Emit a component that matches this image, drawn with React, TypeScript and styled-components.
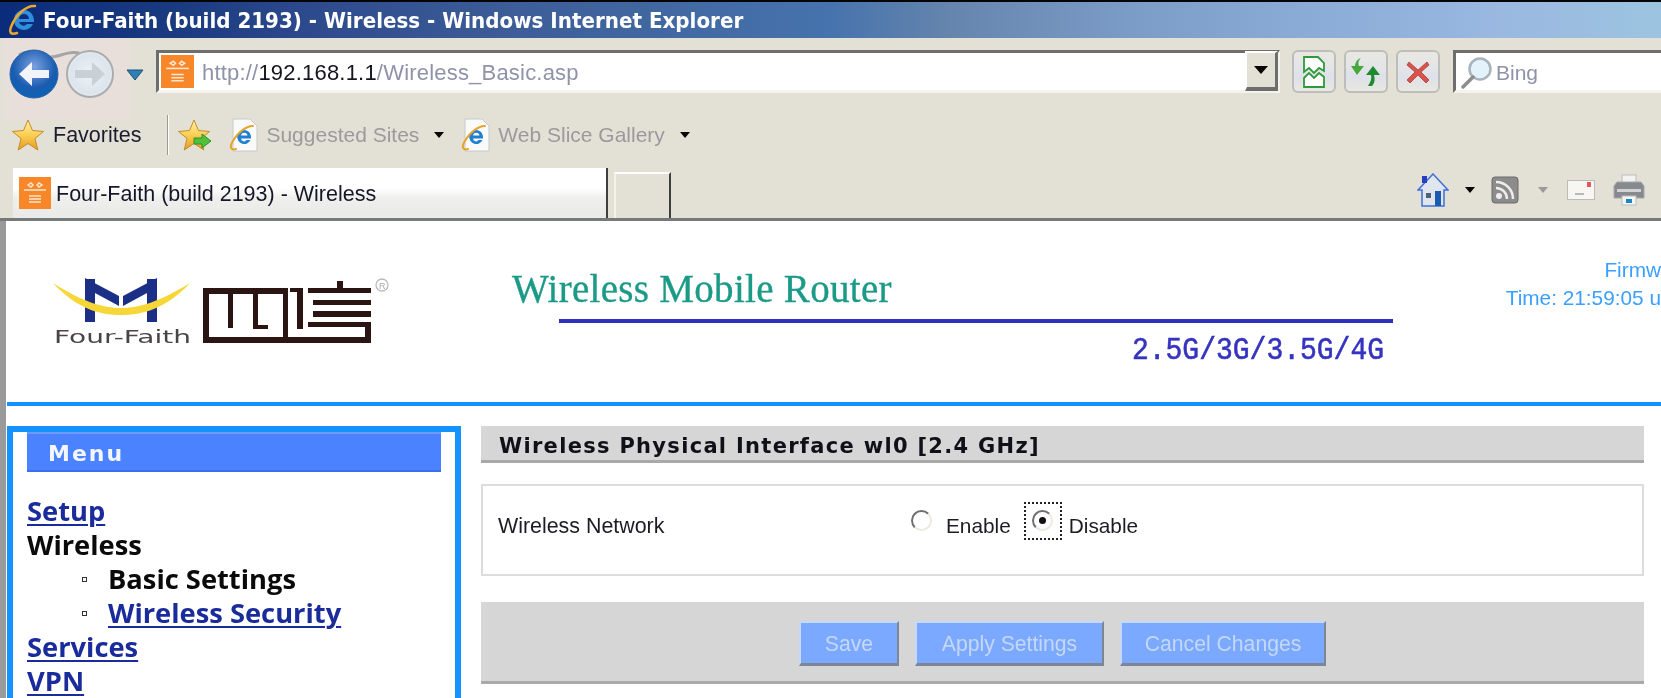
import React from 'react';
import styled, { createGlobalStyle } from 'styled-components';

const GlobalStyle = createGlobalStyle`
    html, body {
        margin: 0;
        height: 698px;
        overflow: hidden;
        background: #fff;
    }
    * {
        box-sizing: border-box;
    }
`;

const uiFont = `"Liberation Sans", Arial, sans-serif`;

const Window = styled.div`
    width: 1661px;
    height: 698px;
    overflow: hidden;
    display: flex;
    flex-direction: column;
    font-family: ${uiFont};
    filter: blur(0.45px);
`;

const TitleBar = styled.div`
    flex: none;
    height: 38px;
    border-top: 2px solid #050505;
    display: flex;
    align-items: center;
    gap: 3px;
    padding-left: 8px;
    background: linear-gradient(90deg, #0a2c7a 0, #1a3a80 170px, #2f4c8e 330px, #3d5e98 520px, #4673ad 830px, #6585ad 950px, #7b9cc7 1130px, #89abd6 1300px, #9ab8e0 1500px, #9cc4e0 1661px);
`;

const TitleText = styled.span`
    color: #fff;
    font-family: "DejaVu Sans", sans-serif;
    font-weight: bold;
    font-size: 22px;
    transform: scaleX(0.905);
    transform-origin: left center;
    white-space: nowrap;
`;

const Chrome = styled.div`
    flex: none;
    height: 183px;
    background: #e3e1d5;
    display: flex;
    flex-direction: column;
    border-bottom: 3px solid #77787a;
`;

const NavRow = styled.div`
    position: relative;
    flex: none;
    height: 65px;
    display: flex;
    align-items: flex-start;
    padding-top: 12px;
    padding-left: 156px;
`;

const NavPatch = styled.div`
    position: absolute;
    left: 5px;
    top: 0;
    width: 125px;
    height: 82px;
    background: #e8dfdb;
`;

const NavCluster = styled.svg`
    position: absolute;
    left: 5px;
    top: 5px;
`;

const InsetBox = styled.div<{ $grow?: boolean }>`
    height: 43px;
    background: #fff;
    border-top: 3px solid #6e6e6e;
    border-left: 3px solid #6e6e6e;
    border-bottom: 3px solid #f4f3ec;
    display: flex;
    align-items: center;
    ${p => p.$grow ? 'flex: 1;' : ''}
`;

const AddressBox = styled(InsetBox)`
    width: 1124px;
    flex: none;
    padding-left: 2px;
    border-right: 2px solid #f4f3ec;
`;

const SearchBox = styled(InsetBox)`
    margin-left: 13px;
    padding-left: 4px;
`;

const Favicon = styled.svg`
    flex: none;
    display: block;
`;

const UrlText = styled.span`
    margin-left: 8px;
    padding-top: 3px;
    flex: 1;
    font-size: 22px;
    color: #8f93a8;
    white-space: nowrap;
    letter-spacing: 0.2px;
`;

const UrlHost = styled.span`
    color: #15151f;
`;

const DropButton = styled.div`
    width: 33px;
    height: 40px;
    margin-top: -1px;
    background: #e3e1d5;
    border-top: 2px solid #fff;
    border-left: 2px solid #fff;
    border-right: 3px solid #6e6e6e;
    border-bottom: 4px solid #6e6e6e;
    display: flex;
    align-items: center;
    justify-content: center;
`;

const Caret = styled.span<{ $muted?: boolean }>`
    display: inline-block;
    flex: none;
    width: 0;
    height: 0;
    border-left: 5px solid transparent;
    border-right: 5px solid transparent;
    border-top: 6px solid ${p => p.$muted ? '#9a9a9a' : '#050505'};
`;

const WideCaret = styled(Caret)`
    border-left-width: 7px;
    border-right-width: 7px;
    border-top-width: 8px;
`;

const ToolButtons = styled.div`
    display: flex;
    gap: 8px;
    margin-left: 12px;
`;

const ToolButton = styled.div`
    width: 44px;
    height: 43px;
    border: 2px solid #bdbdbb;
    border-radius: 6px;
    background: linear-gradient(#e9e8e2 0, #e4e5e8 35%, #dfe1ea 65%, #e8e7e0 100%);
    display: flex;
    align-items: center;
    justify-content: center;
`;

const BingText = styled.span`
    margin-left: 2px;
    padding-top: 3px;
    font-size: 21px;
    color: #8f93a8;
`;

const FavRow = styled.div`
    flex: none;
    height: 58px;
    display: flex;
    align-items: center;
    padding-left: 12px;
    padding-top: 6px;
`;

const FavLabel = styled.span`
    margin-left: 7px;
    margin-right: 26px;
    font-size: 21.5px;
    color: #1c1c30;
    white-space: nowrap;
`;

const FavSeparator = styled.div`
    width: 2px;
    height: 40px;
    background: #9b9b96;
    border-right: 1px solid #fff;
    margin-right: 9px;
`;

const LinkItem = styled.div`
    display: flex;
    align-items: center;
    margin-left: 17px;
`;

const LinkLabel = styled.span`
    margin-left: 7px;
    margin-right: 15px;
    font-size: 21px;
    color: #9a9a9e;
    white-space: nowrap;
`;

const TabRow = styled.div`
    flex: 1;
    display: flex;
    align-items: flex-end;
    padding-left: 13px;
`;

const ActiveTab = styled.div`
    width: 595px;
    height: 50px;
    background: linear-gradient(#fff 0, #fff 40%, #efefec 60%, #e9e9e9 100%);
    border-right: 2px solid #3f3f3f;
    display: flex;
    align-items: center;
    padding-left: 6px;
    gap: 5px;
`;

const TabLabel = styled.span`
    font-size: 21.5px;
    padding-top: 2px;
    color: #16162a;
    white-space: nowrap;
`;

const NewTab = styled.div`
    width: 57px;
    height: 46px;
    margin-left: 6px;
    border-top: 2px solid #fff;
    border-left: 2px solid #f2f1ea;
    border-right: 2px solid #3f3f3f;
`;

const CommandBar = styled.div`
    margin-left: auto;
    height: 50px;
    display: flex;
    align-items: center;
    width: 244px;
    padding-bottom: 6px;
`;

const CommandIcon = styled.svg<{ $gap?: number }>`
    flex: none;
    margin-left: ${p => p.$gap ?? 0}px;
`;

const CaretSlot = styled.div<{ $width: number }>`
    flex: none;
    width: ${p => p.$width}px;
    display: flex;
    justify-content: center;
`;

const Page = styled.div`
    flex: 1;
    min-height: 0;
    display: flex;
    flex-direction: column;
    background: #fff;
    border-left: 6px solid #9a9a9a;
    padding-left: 1px;
`;

const Header = styled.div`
    flex: none;
    height: 185px;
    display: flex;
    border-bottom: 4px solid #1493ff;
`;

const LogoMark = styled.svg`
    flex: none;
    margin: 53px 0 0 43px;
`;

const HeaderTitle = styled.div`
    flex: none;
    width: 881px;
    margin-left: 122px;
    padding-top: 47px;
    display: flex;
    flex-direction: column;
`;

const ProductName = styled.div`
    font-family: "Liberation Serif", "Times New Roman", serif;
    font-size: 39px;
    line-height: 42px;
    letter-spacing: 0.3px;
    -webkit-text-stroke: 0.35px #1b9a88;
    color: #1b9a88;
    white-space: nowrap;
`;

const TitleRule = styled.div`
    height: 4px;
    margin: 9px 0 0 47px;
    background: #3030c0;
`;

const Bands = styled.div`
    margin-top: 12px;
    padding-right: 9px;
    text-align: right;
    font-family: "Liberation Mono", monospace;
    font-size: 28px;
    line-height: 32px;
    color: #3434c0;
    -webkit-text-stroke: 0.5px #3434c0;
    white-space: nowrap;
    transform: scaleY(1.15);
`;

const StatusBlock = styled.div`
    flex: 1;
    padding-top: 35px;
    text-align: right;
    font-size: 20.8px;
    line-height: 28px;
    color: #3aa0ff;
    white-space: nowrap;
`;

const Main = styled.div`
    flex: 1;
    min-height: 0;
    display: flex;
    padding-top: 20px;
`;

const Sidebar = styled.div`
    flex: none;
    width: 454px;
    border: 6px solid #1493ff;
    border-bottom: none;
    padding: 0 14px;
`;

const MenuTitle = styled.div`
    height: 40px;
    padding-left: 21px;
    background: #4a82ff;
    border-top: 2px solid #6d9bff;
    border-bottom: 2px solid #3a70e8;
    color: #f4f6ff;
    font-family: "DejaVu Sans", sans-serif;
    font-weight: bold;
    font-size: 22px;
    line-height: 39px;
    letter-spacing: 2px;
`;

const MenuList = styled.div`
    margin-top: 22px;
    font-family: "Open Sans", sans-serif;
    font-weight: 700;
    font-size: 27.3px;
    line-height: 34px;
    color: #0a0a0a;
`;

const MenuLine = styled.div<{ $sub?: boolean }>`
    display: flex;
    align-items: center;
    height: 34px;
    white-space: nowrap;
    padding-left: ${p => p.$sub ? '55px' : '0'};
`;

const Bullet = styled.span`
    flex: none;
    width: 5px;
    height: 5px;
    margin-right: 21px;
    border: 1.5px solid #333;
    background: #fff;
`;

const MenuLink = styled.a`
    color: #1a2b9c;
    text-decoration: underline;
    text-decoration-thickness: 2px;
    text-underline-offset: 3px;
`;

const Content = styled.div`
    flex: none;
    width: 1163px;
    margin-left: 20px;
    display: flex;
    flex-direction: column;
`;

const SectionTitle = styled.div`
    height: 37px;
    padding-left: 18px;
    background: #d6d6d6;
    border-bottom: 3px solid #a9a9a9;
    font-family: "DejaVu Sans", sans-serif;
    font-weight: bold;
    font-size: 21px;
    line-height: 40px;
    letter-spacing: 1.3px;
    color: #101018;
    white-space: nowrap;
`;

const FieldBox = styled.div`
    height: 92px;
    margin-top: 21px;
    padding: 16px 15px 0;
    border: 2px solid #dcdcdc;
    display: grid;
    grid-template-columns: 412px 1fr;
    align-items: start;
`;

const FieldLabel = styled.div`
    height: 38px;
    padding-top: 12px;
    font-size: 21.4px;
    line-height: 24px;
    color: #1c1c24;
`;

const RadioGroup = styled.div`
    display: flex;
    align-items: flex-start;
`;

const RadioFocus = styled.span<{ $focused?: boolean }>`
    flex: none;
    width: 38px;
    height: 38px;
    padding-bottom: 1px;
    display: flex;
    align-items: center;
    justify-content: center;
    border: 2px dotted ${p => p.$focused ? '#222' : 'transparent'};
`;

const Radio = styled.span<{ $checked?: boolean }>`
    width: 21px;
    height: 21px;
    border-radius: 50%;
    background: #fff;
    border: 2px solid #eceadf;
    border-top-color: #6f6f6f;
    border-left-color: #6f6f6f;
    display: flex;
    align-items: center;
    justify-content: center;
    &::after {
        content: '';
        width: 7px;
        height: 7px;
        border-radius: 50%;
        background: ${p => p.$checked ? '#111' : 'transparent'};
    }
`;

const RadioText = styled.span`
    height: 38px;
    padding-top: 12px;
    font-size: 20.8px;
    line-height: 24px;
    color: #1c1c24;
`;

const EnableRadio = styled(RadioFocus)`
    margin-left: -8px;
`;

const DisableText = styled(RadioText)`
    margin-left: 7px;
`;

const EnableText = styled(RadioText)`
    margin-left: 6px;
    margin-right: 13px;
`;

const ButtonBar = styled.div`
    height: 82px;
    margin-top: 26px;
    background: #d6d6d6;
    border-bottom: 3px solid #a9a9a9;
    padding-top: 19px;
    display: flex;
    justify-content: center;
    align-items: flex-start;
    gap: 16px;
`;

const FormButton = styled.button<{ $width: number }>`
    width: ${p => p.$width}px;
    height: 45px;
    padding: 2px 0 0;
    background: #7aa9ff;
    border: none;
    border-top: 2px solid #c6d8f5;
    border-left: 2px solid #c6d8f5;
    border-right: 2px solid #7c8694;
    border-bottom: 3px solid #7c8694;
    color: #c4d8f6;
    font-family: ${uiFont};
    font-size: 21.2px;
`;

const IeLogo = ({ size }: { size: number }) => (
    <svg width={size} height={size} viewBox="0 0 32 32" style={{ flex: 'none', display: 'block' }}>
        <path d="M16 6a10 10 0 1 0 9 14h-6a4.6 4.6 0 0 1-8-2h15c.5-6.500-4-12-10-12zm-5 9a5 5 0 0 1 10 0z" fill="#2f8fdc" />
        <path d="M27 2C19 1 8 10 3 23c-2 6 0 8 6 6" fill="none" stroke="#e8a92c" strokeWidth="2.500" strokeLinecap="round" />
    </svg>
);

const PageIe = () => (
    <svg width={30} height={34} viewBox="0 0 30 34" style={{ flex: 'none', display: 'block' }}>
        <path d="M4 1h17l7 7v25H4z" fill="#fafafa" stroke="#c8c8c8" />
        <path d="M15 12a7 7 0 1 0 6.500 10h-4a3 3 0 0 1-5.500-1.500h10c.5-4.500-2.500-8.500-7-8.500zm-3 5.500a3.300 3.300 0 0 1 6.500 0z" fill="#1f7fd0" />
        <path d="M24 8C16 8 6 17 2 27c-1 4 2 5 5 4" fill="none" stroke="#e3a52a" strokeWidth="2" strokeLinecap="round" />
    </svg>
);

const SiteIcon = ({ size }: { size: number }) => (
    <Favicon width={size} height={size} viewBox="0 0 32 32">
        <rect width="32" height="32" fill="#f8872a" />
        <g stroke="#fde6cf" strokeWidth="1.500" fill="none">
            <path d="M9 8l3-2 2 2-2 2zM18 8l2-2 3 2-3 2z" />
            <path d="M5 13h22" />
            <path d="M10 19h12M10 22h12M10 25h12" />
        </g>
    </Favicon>
);

const Star = ({ arrow }: { arrow?: boolean }) => (
    <svg width={34} height={32} viewBox="0 0 34 32" style={{ flex: 'none', display: 'block' }}>
        <defs>
            <linearGradient id={arrow ? 'starB' : 'starA'} x1="0" y1="0" x2="0" y2="1">
                <stop offset="0" stopColor="#fff3b0" />
                <stop offset="0.5" stopColor="#f9cf52" />
                <stop offset="1" stopColor="#e79b26" />
            </linearGradient>
        </defs>
        <path d="M16 1l4.500 10.500 11 1-8.500 7 2.800 11.500L16 24.500 6.200 31 9 19.500l-8.500-7 11-1z" fill={`url(#${arrow ? 'starB' : 'starA'})`} stroke="#c98a28" strokeWidth="1" />
        {arrow && <path d="M16 19h8v-4l9 7-9 7v-4h-8z" fill="#4fc13a" stroke="#2f8f26" strokeWidth="1" />}
    </svg>
);

const App = () => (
    <Window>
        <GlobalStyle />
        <TitleBar>
            <IeLogo size={32} />
            <TitleText>Four-Faith (build 2193) - Wireless - Windows Internet Explorer</TitleText>
        </TitleBar>
        <Chrome>
            <NavRow>
                <NavPatch />
                <NavCluster width={140} height={64} viewBox="0 0 140 64">
                    <defs>
                        <radialGradient id="backFill" cx="0.5" cy="0.35" r="0.8">
                            <stop offset="0" stopColor="#7da2e0" />
                            <stop offset="0.55" stopColor="#1a5cb0" />
                            <stop offset="0.85" stopColor="#0a63b5" />
                            <stop offset="1" stopColor="#39b3e6" />
                        </radialGradient>
                        <radialGradient id="fwdFill" cx="0.5" cy="0.5" r="0.6">
                            <stop offset="0" stopColor="#eef2f6" />
                            <stop offset="0.7" stopColor="#dce5ec" />
                            <stop offset="1" stopColor="#f4f8fa" />
                        </radialGradient>
                    </defs>
                    <path d="M14 12c12-8 22 2 32 2s22-10 36 0" fill="none" stroke="#a5a5a5" strokeWidth="3" />
                    <circle cx="29" cy="31" r="24" fill="url(#backFill)" stroke="#2a5fa8" />
                    <path d="M14 31l13-12v8h17v8H27v8z" fill="#f1f4fb" />
                    <circle cx="85" cy="31" r="23" fill="url(#fwdFill)" stroke="#a9adb0" strokeWidth="2" />
                    <path d="M100 31L87 19v8H70v8h17v8z" fill="#c9d0d6" />
                    <path d="M122 27h16l-8 10z" fill="#2f7fb8" stroke="#204f74" />
                </NavCluster>
                <AddressBox>
                    <SiteIcon size={33} />
                    <UrlText>http://<UrlHost>192.168.1.1</UrlHost>/Wireless_Basic.asp</UrlText>
                    <DropButton><WideCaret /></DropButton>
                </AddressBox>
                <ToolButtons>
                    <ToolButton>
                        <svg width={24} height={32} viewBox="0 0 24 32">
                            <path d="M2 1h14l6 6v8l-5-3-5 5-5-5-5 4zM2 22l5-5 5 5 5-5 5 4v10H2z" fill="#fff" stroke="#2f9a3a" strokeWidth="1.800" />
                        </svg>
                    </ToolButton>
                    <ToolButton>
                        <svg width={30} height={30} viewBox="0 0 30 30">
                            <path d="M10 1c-3 3-3 6-2 8h5l-7 9-6-9h4c0-3 2-7 6-8z" fill="#47a83c" />
                            <path d="M21 29c3-3 3-7 2-11h6l-7-9-7 9h5c1 4-1 8-3 11z" fill="#1f8a2c" />
                        </svg>
                    </ToolButton>
                    <ToolButton>
                        <svg width={24} height={24} viewBox="0 0 24 24">
                            <path d="M3 2l9 8 9-8 2 3-8 7 8 8-3 3-8-8-8 8-3-3 8-8-8-7z" fill="#d9534c" stroke="#a9403a" strokeWidth="0.800" />
                        </svg>
                    </ToolButton>
                </ToolButtons>
                <SearchBox $grow>
                    <svg width={34} height={34} viewBox="0 0 34 34" style={{ flex: 'none' }}>
                        <circle cx="20" cy="14" r="10.500" fill="#e4f3fb" stroke="#a8b4bc" strokeWidth="2.500" />
                        <path d="M13 22L3 32" stroke="#8d8d8d" strokeWidth="3.500" strokeLinecap="round" />
                    </svg>
                    <BingText>Bing</BingText>
                </SearchBox>
            </NavRow>
            <FavRow>
                <Star />
                <FavLabel>Favorites</FavLabel>
                <FavSeparator />
                <Star arrow />
                <LinkItem>
                    <PageIe />
                    <LinkLabel>Suggested Sites</LinkLabel>
                    <Caret />
                </LinkItem>
                <LinkItem>
                    <PageIe />
                    <LinkLabel>Web Slice Gallery</LinkLabel>
                    <Caret />
                </LinkItem>
            </FavRow>
            <TabRow>
                <ActiveTab>
                    <SiteIcon size={32} />
                    <TabLabel>Four-Faith (build 2193) - Wireless</TabLabel>
                </ActiveTab>
                <NewTab />
                <CommandBar>
                    <CommandIcon width={32} height={34} viewBox="0 0 32 34">
                        <path d="M16 1L1 17h4v16h22V17h4z" fill="#dfe6ee" stroke="#3f6fd8" strokeWidth="1.500" />
                        <rect x="5" y="3" width="5" height="7" fill="#2a3fc0" />
                        <rect x="9" y="20" width="5" height="5" fill="#50627a" />
                        <rect x="18" y="18" width="6" height="15" fill="#1a5cb0" />
                    </CommandIcon>
                    <CaretSlot $width={42}><Caret /></CaretSlot>
                    <CommandIcon width={28} height={28} viewBox="0 0 28 28">
                        <rect x="1" y="1" width="26" height="26" rx="3" fill="#8c8c8c" stroke="#6a6a6a" />
                        <circle cx="8" cy="20" r="3" fill="#eee" />
                        <path d="M5 12a11 11 0 0 1 11 11M5 6a17 17 0 0 1 17 17" fill="none" stroke="#eee" strokeWidth="2.500" />
                    </CommandIcon>
                    <CaretSlot $width={48}><Caret $muted /></CaretSlot>
                    <CommandIcon width={28} height={20} viewBox="0 0 28 20">
                        <rect x="0.500" y="0.500" width="27" height="19" fill="#f7f6f2" stroke="#bcbcbc" />
                        <rect x="20" y="2" width="4" height="5" fill="#e5565a" />
                        <path d="M8 14h9" stroke="#a5a5a5" strokeWidth="1.500" />
                    </CommandIcon>
                    <CommandIcon width={32} height={32} viewBox="0 0 32 32" $gap={18}>
                        <rect x="9" y="1" width="14" height="10" fill="#f2f2f0" stroke="#bcbcbc" />
                        <path d="M1 12l3-4h24l3 4v12H1z" fill="#868a8e" stroke="#a5a5a5" />
                        <rect x="4" y="15" width="24" height="3" fill="#d2d2d2" />
                        <rect x="9" y="22" width="14" height="9" fill="#f5f5f5" stroke="#bcbcbc" />
                        <rect x="13" y="25" width="6" height="4" fill="#1a86c8" />
                    </CommandIcon>
                </CommandBar>
            </TabRow>
        </Chrome>
        <Page>
            <Header>
                <LogoMark width={340} height={72} viewBox="0 0 340 72">
                    <path d="M35 5h10v43H35zM97 5h10v43H97z" fill="#1c2f86" />
                    <path d="M35 4l34 18v10L45 19H35zM107 4L73 22v10l24-13h10z" fill="#1c2f86" />
                    <path d="M3 9c30 19 50 25 68 25s38-6 69-25c-24 26-48 32-69 32S27 35 3 9z" fill="#f7d737" />
                    <text x="4" y="69" fontFamily="DejaVu Sans, sans-serif" fontSize="18" textLength="137" lengthAdjust="spacingAndGlyphs" fill="#4a4445">Four-Faith</text>
                    <g fill="#2a1512">
                        <path d="M153 14h6v55h-6zM153 63h168v6H153zM153 14h85v6h-85zM315 48h6v21h-6z" />
                        <path d="M178 18h5v36h-5zM203 18h5v36h-5zM203 51h15v4h-15zM233 14h5v49h-5z" />
                        <path d="M247 14h6v41h-6zM240 14h7v4h-7zM287 7h6v7h-6z" />
                        <path d="M258 14h63v5h-63zM263 26h58v5h-58zM263 37h58v6h-58zM258 48h63v5h-63z" />
                    </g>
                    <circle cx="332" cy="11" r="6" fill="none" stroke="#bbb" strokeWidth="1.300" />
                    <text x="329" y="14.500" fontFamily="Liberation Sans, sans-serif" fontSize="9" fill="#aaa">R</text>
                </LogoMark>
                <HeaderTitle>
                    <ProductName>Wireless Mobile Router</ProductName>
                    <TitleRule />
                    <Bands>2.5G/3G/3.5G/4G</Bands>
                </HeaderTitle>
                <StatusBlock>
                    <div>Firmw</div>
                    <div>Time: 21:59:05 u</div>
                </StatusBlock>
            </Header>
            <Main>
                <Sidebar>
                    <MenuTitle>Menu</MenuTitle>
                    <MenuList>
                        <MenuLine><MenuLink>Setup</MenuLink></MenuLine>
                        <MenuLine>Wireless</MenuLine>
                        <MenuLine $sub><Bullet />Basic Settings</MenuLine>
                        <MenuLine $sub><Bullet /><MenuLink>Wireless Security</MenuLink></MenuLine>
                        <MenuLine><MenuLink>Services</MenuLink></MenuLine>
                        <MenuLine><MenuLink>VPN</MenuLink></MenuLine>
                    </MenuList>
                </Sidebar>
                <Content>
                    <SectionTitle>Wireless Physical Interface wl0 [2.4 GHz]</SectionTitle>
                    <FieldBox>
                        <FieldLabel>Wireless Network</FieldLabel>
                        <RadioGroup>
                            <EnableRadio><Radio /></EnableRadio>
                            <EnableText>Enable</EnableText>
                            <RadioFocus $focused><Radio $checked /></RadioFocus>
                            <DisableText>Disable</DisableText>
                        </RadioGroup>
                    </FieldBox>
                    <ButtonBar>
                        <FormButton $width={100} disabled>Save</FormButton>
                        <FormButton $width={189} disabled>Apply Settings</FormButton>
                        <FormButton $width={206} disabled>Cancel Changes</FormButton>
                    </ButtonBar>
                </Content>
            </Main>
        </Page>
    </Window>
);

export default App;
